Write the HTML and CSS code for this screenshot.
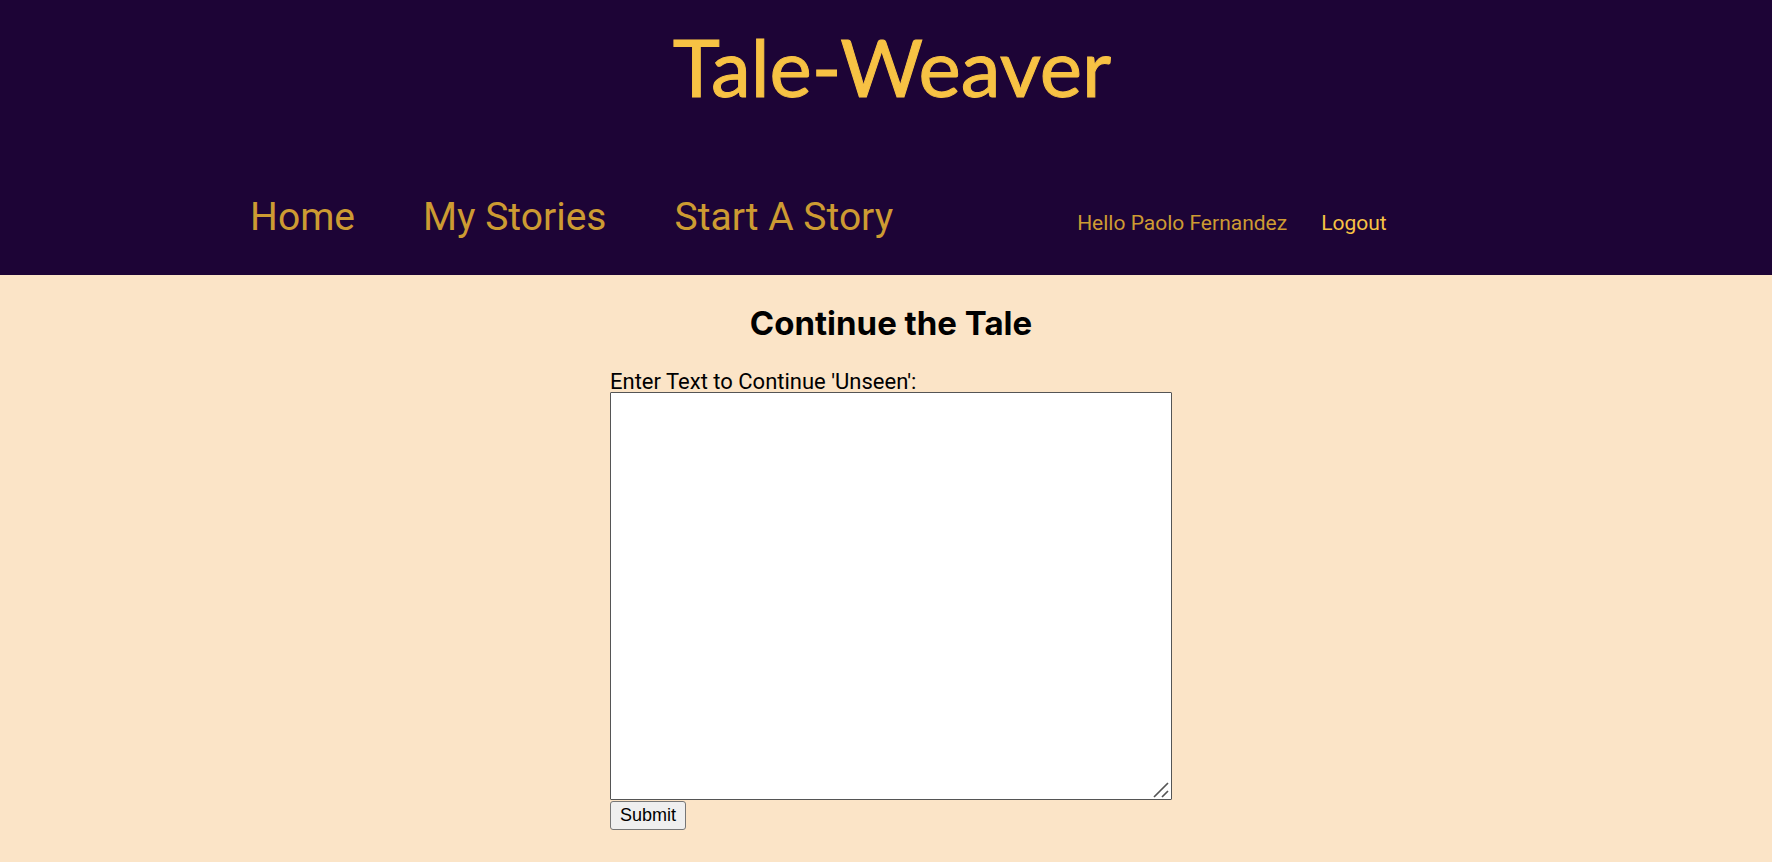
FILE: index.html
```html
<!DOCTYPE html>
<html lang="en">
<head>
<meta charset="utf-8">
<meta name="viewport" content="width=device-width, initial-scale=1">
<title>Tale-Weaver</title>
<link rel="stylesheet" href="styles.css">
</head>
<body>
<header class="site-header">
  <h1 class="brand">Tale-Weaver</h1>
  <nav class="nav">
    <div class="nav-links">
      <a class="nav-link" href="#home">Home</a>
      <a class="nav-link" href="#stories">My Stories</a>
      <a class="nav-link" href="#start">Start A Story</a>
    </div>
    <div class="account">
      <span class="greeting">Hello Paolo Fernandez</span>
      <button class="logout" type="button">Logout</button>
    </div>
  </nav>
</header>
<main class="page">
  <h2 class="page-title">Continue the Tale</h2>
  <form class="tale-form">
    <label class="tale-label" for="tale">Enter Text to Continue 'Unseen':</label>
    <div class="tale-field">
      <textarea class="tale-text" id="tale" name="tale"></textarea>
      <svg class="grip" viewBox="0 0 16 16" aria-hidden="true"><path d="M1 15 15 1M9 15 15 9" fill="none" stroke="#555" stroke-width="1.700"/></svg>
    </div>
    <button class="submit" type="submit">Submit</button>
  </form>
</main>
</body>
</html>
```
FILE: styles.css
```css
* {
  box-sizing: border-box;
}

body {
  margin: 0;
  min-height: 100vh;
  background: #fbe4c7;
  color: #000;
  font-family: Roboto, "Liberation Sans", sans-serif;
  font-size: 22px;
}

.site-header {
  background: #1d0436;
  color: #cd9b32;
  padding-bottom: 28px;
}

.brand {
  margin: 0;
  padding: 16px 0 71px 12px;
  color: #f7c244;
  font-family: Papyrus, Lato, sans-serif;
  font-size: 80px;
  font-weight: 400;
  line-height: 100px;
  text-align: center;
  -webkit-text-stroke: 1px #f7c244;
}

.nav {
  display: flex;
  align-items: baseline;
  gap: 184px;
  padding-left: 14vw;
  margin-left: 2px;
}

.nav-links {
  display: flex;
  gap: 68px;
}

.nav-link {
  color: inherit;
  font-size: 39px;
  line-height: 60px;
  text-decoration: none;
  white-space: nowrap;
}

.account {
  display: flex;
  align-items: baseline;
  gap: 34px;
  font-size: 21px;
  white-space: nowrap;
}

.logout {
  padding: 0;
  border: 0;
  background: none;
  color: #f7c244;
  font: inherit;
  cursor: pointer;
}

.page {
  padding: 28px 0 32px 10px;
}

.page-title {
  margin: 0 0 28px;
  font-family: Inter, "Liberation Sans", sans-serif;
  font-size: 33px;
  line-height: 40px;
  text-align: center;
}

.tale-form {
  width: 562px;
  max-width: 100%;
  margin: 0 auto;
}

.tale-label {
  display: block;
  line-height: 21px;
}

.tale-field {
  position: relative;
}

.tale-text {
  display: block;
  width: 100%;
  height: 408px;
  padding: 4px;
  border: 1px solid #555;
  border-radius: 1px;
  background: #fff;
  font: inherit;
  resize: none;
}

.grip {
  position: absolute;
  right: 3px;
  bottom: 2px;
  width: 16px;
  height: 16px;
  pointer-events: none;
}

.submit {
  display: block;
  margin-top: 1px;
  padding: 0 9px;
  height: 29px;
  border: 1px solid #767676;
  border-radius: 3px;
  background: #efefef;
  color: #000;
  font: 18px "Liberation Sans", sans-serif;
}
```
